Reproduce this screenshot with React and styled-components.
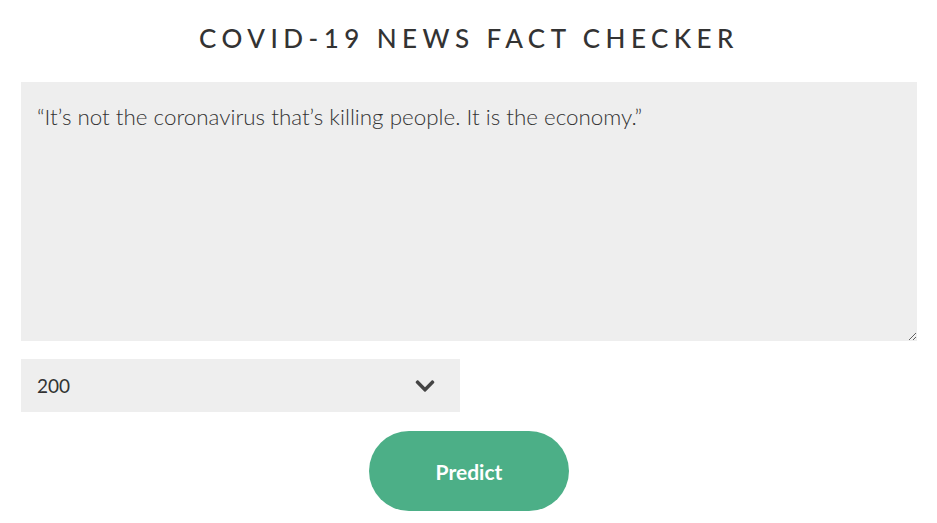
import React, { useState } from 'react';
import styled, { createGlobalStyle } from 'styled-components';
import { FaChevronDown } from 'react-icons/fa';

const GlobalStyle = createGlobalStyle`
    body {
        margin: 0;
        background: #ffffff;
        font-family: Lato, "Open Sans", sans-serif;
    }
`;

const Page = styled.div`
    display: flex;
    flex-direction: column;
    align-items: center;
    padding: 22px 20px 0 21px;
`;

const Title = styled.h1`
    margin: 0 0 28px;
    font-size: 26px;
    font-weight: 500;
    letter-spacing: 0.21em;
    color: #333333;
`;

const Input = styled.textarea`
    box-sizing: border-box;
    width: 100%;
    height: 259px;
    padding: 20px 16px;
    border: none;
    outline: none;
    background: #eeeeee;
    color: #333333;
    font-family: Lato, "Open Sans", sans-serif;
    font-size: 22.4px;
    font-weight: 300;
    line-height: 1.3;
    resize: vertical;
`;

const SelectRow = styled.div`
    align-self: flex-start;
    position: relative;
    width: 439px;
    margin-top: 18px;
`;

const Select = styled.select`
    box-sizing: border-box;
    width: 100%;
    height: 53px;
    padding: 0 16px;
    border: none;
    border-radius: 0;
    outline: none;
    appearance: none;
    background: #eeeeee;
    color: #333333;
    font-family: Lato, "Open Sans", sans-serif;
    font-size: 19px;
`;

const Chevron = styled.span`
    position: absolute;
    right: 24px;
    top: 50%;
    transform: translateY(-50%);
    display: flex;
    color: #444444;
    pointer-events: none;
`;

const Button = styled.button`
    margin-top: 19px;
    width: 200px;
    height: 80px;
    border: none;
    border-radius: 40px;
    background: #4caf87;
    color: #ffffff;
    font-family: Lato, "Open Sans", sans-serif;
    font-size: 21px;
    font-weight: 700;
    cursor: pointer;
`;

export default function App() {
    const [text, setText] = useState('\u201cIt\u2019s not the coronavirus that\u2019s killing people. It is the economy.\u201d');
    const [count, setCount] = useState('200');

    return (
        <Page>
            <GlobalStyle />
            <Title>COVID-19 NEWS FACT CHECKER</Title>
            <Input value={text} onChange={e => setText(e.target.value)} />
            <SelectRow>
                <Select value={count} onChange={e => setCount(e.target.value)}>
                    <option value="50">50</option>
                    <option value="100">100</option>
                    <option value="200">200</option>
                    <option value="500">500</option>
                </Select>
                <Chevron><FaChevronDown size={22} /></Chevron>
            </SelectRow>
            <Button>Predict</Button>
        </Page>
    );
}
